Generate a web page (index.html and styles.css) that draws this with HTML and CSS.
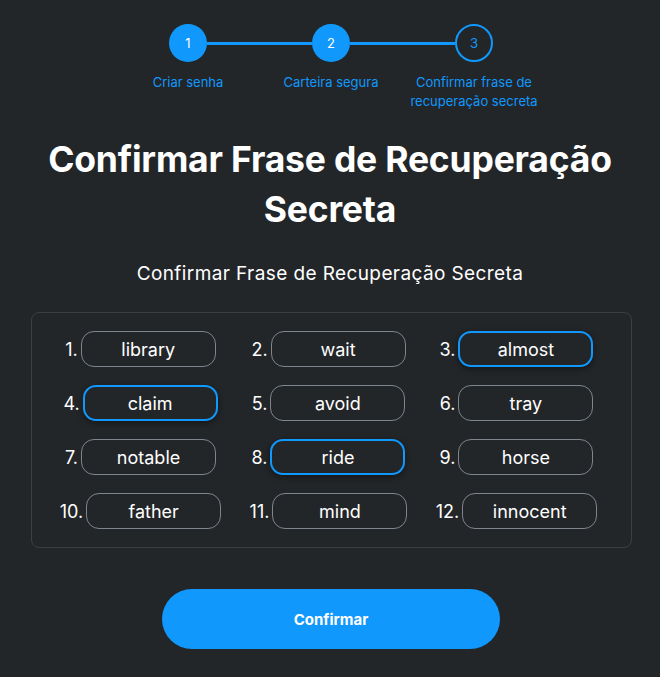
FILE: index.html
```html
<!DOCTYPE html>
<html lang="pt">
<head>
<meta charset="utf-8">
<link rel="stylesheet" href="styles.css">
</head>
<body>
<main class="page">
  <div class="stepper">
    <div class="circles">
      <div class="circle done">1</div>
      <div class="line"></div>
      <div class="circle done">2</div>
      <div class="line"></div>
      <div class="circle current">3</div>
    </div>
    <div class="labels">
      <div class="label">Criar senha</div>
      <div class="label">Carteira segura</div>
      <div class="label">Confirmar frase de recuperação secreta</div>
    </div>
  </div>

  <h1 class="title">Confirmar Frase de Recuperação Secreta</h1>
  <h2 class="subtitle">Confirmar Frase de Recuperação Secreta</h2>

  <div class="box">
    <div class="grid">
      <div class="cell"><span class="num">1.</span><span class="pill">library</span></div>
      <div class="cell"><span class="num">2.</span><span class="pill">wait</span></div>
      <div class="cell"><span class="num">3.</span><span class="pill active">almost</span></div>
      <div class="cell"><span class="num">4.</span><span class="pill active">claim</span></div>
      <div class="cell"><span class="num">5.</span><span class="pill">avoid</span></div>
      <div class="cell"><span class="num">6.</span><span class="pill">tray</span></div>
      <div class="cell"><span class="num">7.</span><span class="pill">notable</span></div>
      <div class="cell"><span class="num">8.</span><span class="pill active">ride</span></div>
      <div class="cell"><span class="num">9.</span><span class="pill">horse</span></div>
      <div class="cell"><span class="num">10.</span><span class="pill">father</span></div>
      <div class="cell"><span class="num">11.</span><span class="pill">mind</span></div>
      <div class="cell"><span class="num">12.</span><span class="pill">innocent</span></div>
    </div>
  </div>

  <div class="actions">
    <button class="confirm">Confirmar</button>
  </div>
</main>
</body>
</html>
```

FILE: styles.css
```css
html, body {
  margin: 0;
  padding: 0;
  background: #232629;
}
body {
  font-family: "Inter", "Lato", sans-serif;
  color: #ffffff;
}
.page {
  width: 660px;
  height: 677px;
  overflow: hidden;
  padding-top: 24px;
  box-sizing: border-box;
}
.stepper {
  display: flex;
  flex-direction: column;
  align-items: center;
  margin-left: 2px;
}
.circles {
  display: flex;
  align-items: center;
}
.circle {
  width: 38px;
  height: 38px;
  border-radius: 50%;
  box-sizing: border-box;
  display: flex;
  align-items: center;
  justify-content: center;
  font-size: 13px;
  background: #1098fc;
  color: #ffffff;
}
.circle.current {
  background: transparent;
  border: 2px solid #1098fc;
  color: #1098fc;
}
.line {
  width: 105px;
  height: 3px;
  background: #1098fc;
}
.labels {
  display: flex;
  margin-top: 11px;
}
.label {
  width: 143px;
  text-align: center;
  font-size: 13px;
  line-height: 19px;
  color: #1098fc;
  padding: 0 8px;
  box-sizing: border-box;
}
.label:last-child {
  padding: 0 6px;
}
.title {
  margin: 24px auto 0;
  width: 600px;
  text-align: center;
  font-size: 35.5px;
  line-height: 50px;
  font-weight: 700;
  letter-spacing: -0.2px;
}
.subtitle {
  margin: 27px 0 0;
  text-align: center;
  font-size: 19px;
  line-height: 24px;
  font-weight: 400;
  letter-spacing: 0.4px;
}
.box {
  margin: 26px 0 0 31px;
  width: 601px;
  border: 1px solid #3b3f44;
  border-radius: 8px;
  box-sizing: border-box;
  padding: 18px 0;
}
.grid {
  display: grid;
  grid-template-columns: repeat(3, 188px);
  row-gap: 18px;
  justify-content: center;
  padding-right: 6px;
}
.cell {
  display: flex;
  align-items: center;
  justify-content: center;
  gap: 3px;
}
.num {
  font-size: 18px;
}
.pill {
  width: 135px;
  height: 36px;
  box-sizing: border-box;
  border: 1px solid #7e858d;
  border-radius: 13px;
  display: flex;
  align-items: center;
  justify-content: center;
  font-size: 18px;
}
.pill.active {
  border: 2px solid #1098fc;
  box-shadow: 0 2px 6px rgba(0, 0, 0, 0.45);
}
.actions {
  display: flex;
  justify-content: center;
  margin-top: 41px;
  padding-left: 2px;
}
.confirm {
  width: 338px;
  height: 60px;
  border: none;
  border-radius: 30px;
  background: #1098fc;
  color: #ffffff;
  font-family: inherit;
  font-size: 15px;
  font-weight: 700;
}
```
